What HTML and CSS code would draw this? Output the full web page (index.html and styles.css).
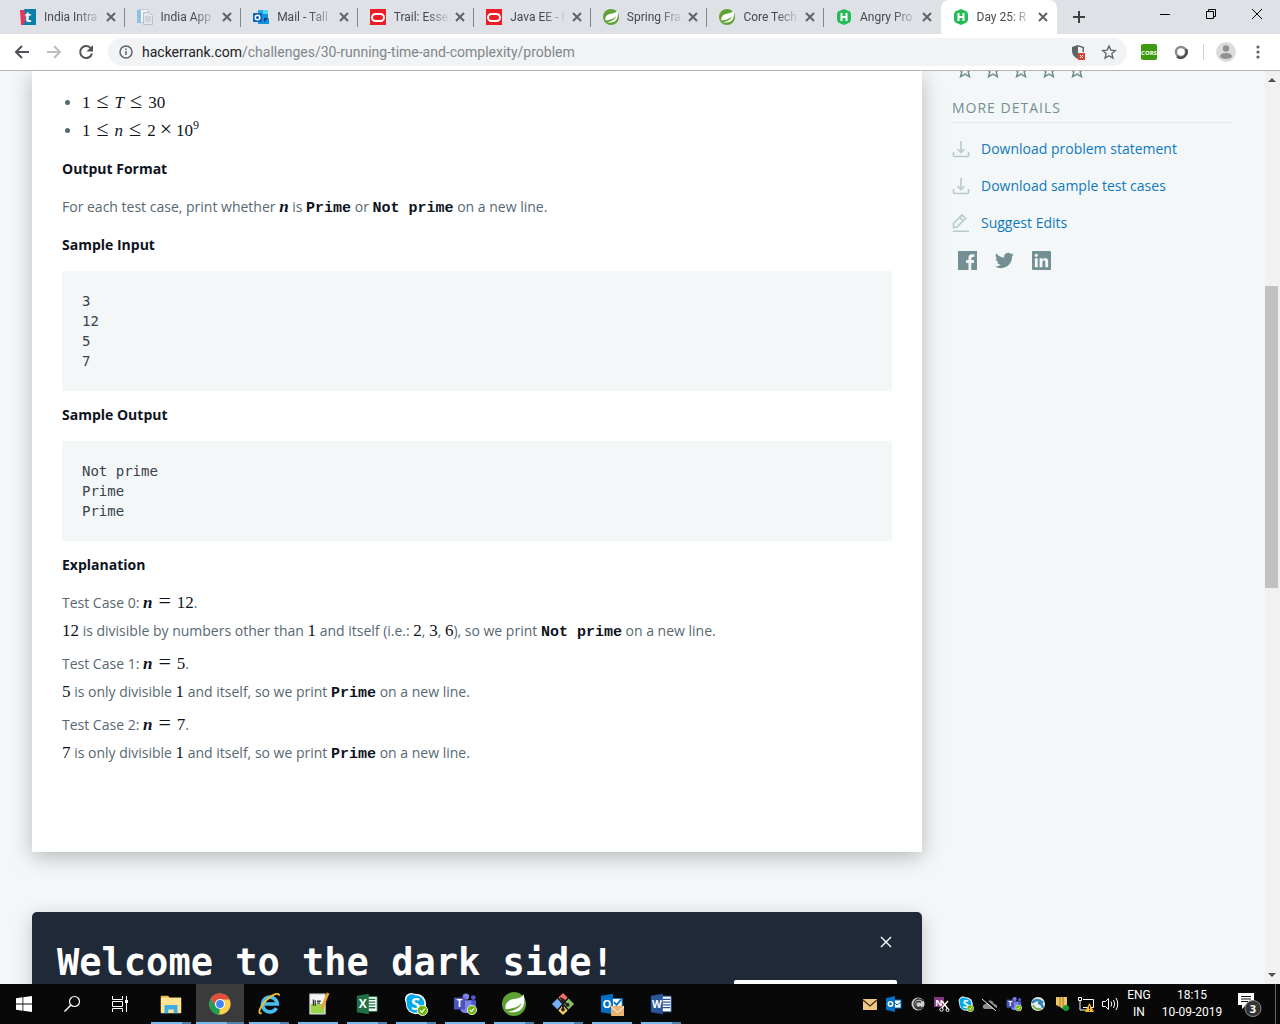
FILE: index.html
```html
<!DOCTYPE html>
<html lang="en">
<head>
<meta charset="utf-8">
<title>Day 25: Running Time and Complexity | HackerRank</title>
<link rel="stylesheet" href="styles.css">
</head>
<body>
<svg class="defs" aria-hidden="true">
  <defs>
    <symbol id="x" viewBox="0 0 16 16"><path d="M4 4l8 8M12 4l-8 8" fill="none" stroke="currentColor" stroke-width="2"/></symbol>
    <symbol id="oracle" viewBox="0 0 16 16"><path fill="#ee1c25" d="M0 0h16v16H0z"/><rect x="2" y="5" width="12" height="7" rx="3.500" fill="none" stroke="#fff" stroke-width="2"/></symbol>
    <symbol id="leaf" viewBox="0 0 16 16"><circle cx="8" cy="8" r="8" fill="#5fa134"/><path fill="#fff" d="M14.500 1.500c1 5 .2 9.200-3 11-2.500 1.400-5.500 1-8 .8 4.500-.8 8.500-2.500 9.700-6-2.500 3-6.700 3.800-10.700 4.200C1.500 7.500 4.500 5.200 8 4.700c2.600-.4 5-.8 6.500-3.200z"/></symbol>
    <symbol id="hacker" viewBox="0 0 16 16"><path fill="#27bb57" d="M8 0l6 2.500L15 5v6l-1.200 2.500L8 16l-5.800-2.500L1 11V5l1-2.500z"/><path d="M5.500 4v8M10.500 4v8M5.500 8h5" stroke="#fff" stroke-width="2"/></symbol>
    <symbol id="outlook" viewBox="0 0 16 16"><path fill="#1490df" d="M5 1h10v8l1 1v5H5z"/><path fill="#50d9ff" d="M10 1h5v4h-5z"/><path fill="#28a8ea" d="M5 1h5v4H5z"/><path fill="#123b6d" d="M11 9l4 0-4 4z"/><rect y="4" width="9" height="9" rx="1" fill="#0a64bd"/><circle cx="4.500" cy="8.500" r="2.300" fill="none" stroke="#fff" stroke-width="1.500"/></symbol>
    <symbol id="download" viewBox="0 0 18 18"><path d="M1.500 12v3.500q0 1 1 1h13q1 0 1-1V12M9 1v11M5.500 9L9 12.500 12.500 9" fill="none" stroke="#b7c9cc" stroke-width="1.600"/></symbol>
    <symbol id="star" viewBox="0 0 24 24"><path d="M12 3l2.700 6.200 6.800.6-5.200 4.500 1.600 6.700-5.900-3.500L6.100 21l1.600-6.700-5.200-4.500 6.800-.6z" fill="none" stroke="currentColor" stroke-width="2"/></symbol>
    <symbol id="ok" viewBox="0 0 12 12"><circle cx="6" cy="6" r="5.500" fill="#6bb700" stroke="#fff"/><path d="M3.500 6l2 2 3-4" fill="none" stroke="#fff" stroke-width="1.400"/></symbol>
    <symbol id="teams" viewBox="0 0 26 26"><circle cx="14" cy="5" r="3.500" fill="#7b83eb"/><circle cx="22" cy="6" r="2.600" fill="#5059c9"/><path fill="#5059c9" d="M18 9h7v7q0 4-5 4z"/><path fill="#7b83eb" d="M9 9h11v9q0 5-6 5t-6-5z"/><path fill="#4b53bc" d="M1 6h12v13H1z"/><text x="7" y="16.500" text-anchor="middle" class="glyph g11">T</text><use href="#ok" x="15" y="14" width="11" height="11"/></symbol>
    <symbol id="skype" viewBox="0 0 26 26"><circle cx="8" cy="8" r="7" fill="#fff"/><circle cx="18" cy="18" r="6" fill="#fff"/><circle cx="13" cy="13" r="11" fill="#fff"/><circle cx="8.500" cy="8.500" r="6" fill="#00a9ec"/><circle cx="12.500" cy="13" r="9.500" fill="#00a9ec"/><text x="12.500" y="19" text-anchor="middle" class="glyph g18">S</text><use href="#ok" x="14" y="14" width="12" height="12"/></symbol>
  </defs>
</svg>

<header class="browser">
  <div class="tabstrip">
    <nav class="tabs" aria-label="Open tabs">
      <div class="tab"><svg class="fav" viewBox="0 0 16 16"><path fill="#e8355a" d="M0 1h8v15H1z"/><path fill="#067fab" d="M4 0h12v16H3q5-6 1-16z"/><text x="8" y="13" text-anchor="middle" class="glyph g15">t</text></svg><span class="title">India Intra</span><button class="close" aria-label="Close tab"><svg><use href="#x"/></svg></button></div>
      <div class="tab"><svg class="fav" viewBox="0 0 16 16"><path d="M2 .5h9v13H2z" fill="#eef5fb" stroke="#b9cfe0"/><path fill="#8fbfe3" d="M0 1h4v13H0z"/><path fill="#e3e6ea" stroke="#b9bfc6" d="M6.500 3.500h6l3 3v9h-9z"/><path stroke="#b9bfc6" d="M8 8h6M8 10h6M8 12h6"/></svg><span class="title">India App</span><button class="close" aria-label="Close tab"><svg><use href="#x"/></svg></button></div>
      <div class="tab"><svg class="fav"><use href="#outlook"/></svg><span class="title">Mail - Tall</span><button class="close" aria-label="Close tab"><svg><use href="#x"/></svg></button></div>
      <div class="tab"><svg class="fav"><use href="#oracle"/></svg><span class="title">Trail: Esse</span><button class="close" aria-label="Close tab"><svg><use href="#x"/></svg></button></div>
      <div class="tab"><svg class="fav"><use href="#oracle"/></svg><span class="title">Java EE - I</span><button class="close" aria-label="Close tab"><svg><use href="#x"/></svg></button></div>
      <div class="tab"><svg class="fav"><use href="#leaf"/></svg><span class="title">Spring Fra</span><button class="close" aria-label="Close tab"><svg><use href="#x"/></svg></button></div>
      <div class="tab"><svg class="fav"><use href="#leaf"/></svg><span class="title">Core Tech</span><button class="close" aria-label="Close tab"><svg><use href="#x"/></svg></button></div>
      <div class="tab last"><svg class="fav"><use href="#hacker"/></svg><span class="title">Angry Pro</span><button class="close" aria-label="Close tab"><svg><use href="#x"/></svg></button></div>
      <div class="tab active"><svg class="fav"><use href="#hacker"/></svg><span class="title">Day 25: R</span><button class="close" aria-label="Close tab"><svg><use href="#x"/></svg></button></div>
    </nav>
    <button class="newtab" aria-label="New tab"><svg viewBox="0 0 16 16"><path d="M8 2v12M2 8h12" stroke="#3c4043" stroke-width="2"/></svg></button>
    <div class="winctl">
      <button aria-label="Minimize"><svg viewBox="0 0 12 12"><path d="M1 6.500h10" stroke="#000"/></svg></button>
      <button aria-label="Restore"><svg viewBox="0 0 12 12"><path d="M1.500 3.500h7v7h-7zM3.500 3.500v-2h7v7h-2" fill="none" stroke="#000"/></svg></button>
      <button aria-label="Close"><svg viewBox="0 0 12 12"><path d="M1 1l10 10M11 1L1 11" stroke="#000"/></svg></button>
    </div>
  </div>
  <div class="toolbar">
    <button class="nav" aria-label="Back"><svg viewBox="0 0 16 16"><path d="M15 8H2M8 2L2 8l6 6" fill="none" stroke="#505357" stroke-width="2"/></svg></button>
    <button class="nav" aria-label="Forward"><svg viewBox="0 0 16 16"><path d="M1 8h13M8 2l6 6-6 6" fill="none" stroke="#bcbec1" stroke-width="2"/></svg></button>
    <button class="nav" aria-label="Reload"><svg viewBox="0 0 16 16"><path d="M13 4.500A6 6 0 1 0 14 9.500" fill="none" stroke="#505357" stroke-width="2"/><path fill="#505357" d="M15 1v6.500H8.500z"/></svg></button>
    <div class="omnibox">
      <svg class="info" viewBox="0 0 16 16"><circle cx="8" cy="8" r="6" fill="none" stroke="#5f6368" stroke-width="1.500"/><path d="M8 7v4M8 4.500v1.500" stroke="#5f6368" stroke-width="1.500"/></svg>
      <label for="url">hackerrank.com</label><input id="url" type="text" value="/challenges/30-running-time-and-complexity/problem">
      <svg class="ic16" viewBox="0 0 16 16"><path fill="#5f6368" d="M8 1l6 2v5h-6v7C4 13 2 10.500 2 7V3z"/><path fill="#f1f3f4" d="M8 2.500l4.500 1.500V8H8z"/><path fill="#db4437" d="M8 9h7v7H8z"/><path d="M10 11l3 3M13 11l-3 3" stroke="#fff"/></svg>
      <button class="bookmark" aria-label="Bookmark this page"><svg class="ic16"><use href="#star"/></svg></button>
    </div>
    <div class="extensions">
      <svg class="ic16" viewBox="0 0 16 16"><rect width="16" height="16" rx="2" fill="#3f9a10"/><text x="8" y="11" text-anchor="middle" class="glyph g6">CORS</text></svg>
      <svg class="ic16" viewBox="0 0 16 16"><circle cx="8" cy="8" r="5" fill="#fff" stroke="#8b8d8f" stroke-width="2.500"/><path d="M4 12.500A6 6 0 0 0 13 5" fill="none" stroke="#4d4f51" stroke-width="2.500"/></svg>
      <span class="vline"></span>
      <svg class="avatar" viewBox="0 0 20 20"><circle cx="10" cy="10" r="10" fill="#dcdcdd"/><circle cx="10" cy="6.500" r="3.200" fill="#8e9093"/><path fill="#8e9093" d="M4 15q0-4 6-4t6 4q-2.500 2-6 2t-6-2z"/></svg>
      <svg class="ic16" viewBox="0 0 16 16"><g fill="#5f6368"><circle cx="8" cy="3" r="1.600"/><circle cx="8" cy="8" r="1.600"/><circle cx="8" cy="13" r="1.600"/></g></svg>
    </div>
  </div>
</header>

<div class="viewport">
  <div class="page">
    <main>
      <article class="card">
        <ul>
          <li><span class="math">1<span class="op">≤</span><i>T</i><span class="op">≤</span>30</span></li>
          <li><span class="math">1<span class="op">≤</span><i>n</i><span class="op">≤</span>2<span class="op bin">×</span>10<sup>9</sup></span></li>
        </ul>
        <h2>Output Format</h2>
        <p>For each test case, print whether <b class="math"><i>n</i></b> is <code>Prime</code> or <code>Not prime</code> on a new line.</p>
        <h2>Sample Input</h2>
        <pre>3
12
5
7</pre>
        <h2>Sample Output</h2>
        <pre>Not prime
Prime
Prime</pre>
        <h2>Explanation</h2>
        <p class="case">Test Case 0: <span class="math"><b><i>n</i></b><span class="op">=</span>12</span>.<br>
        <span class="math">12</span> is divisible by numbers other than <span class="math">1</span> and itself (i.e.: <span class="math">2</span>, <span class="math">3</span>, <span class="math">6</span>), so we print <code>Not prime</code> on a new line.</p>
        <p class="case">Test Case 1: <span class="math"><b><i>n</i></b><span class="op">=</span>5</span>.<br>
        <span class="math">5</span> is only divisible <span class="math">1</span> and itself, so we print <code>Prime</code> on a new line.</p>
        <p class="case">Test Case 2: <span class="math"><b><i>n</i></b><span class="op">=</span>7</span>.<br>
        <span class="math">7</span> is only divisible <span class="math">1</span> and itself, so we print <code>Prime</code> on a new line.</p>
      </article>
      <section class="banner">
        <div class="banner-head">
          <h1>Welcome to the dark side!</h1>
          <button class="dismiss" aria-label="Dismiss"><svg viewBox="0 0 12 12"><path d="M1 1l10 10M11 1L1 11" stroke="#fff" stroke-width="1.400"/></svg></button>
        </div>
        <button class="cta" aria-label="Try it"></button>
      </section>
    </main>
    <aside>
      <div class="stars">
        <svg><use href="#star"/></svg><svg><use href="#star"/></svg><svg><use href="#star"/></svg><svg><use href="#star"/></svg><svg><use href="#star"/></svg>
      </div>
      <h3>MORE DETAILS</h3>
      <ul class="links">
        <li><svg><use href="#download"/></svg><a href="#">Download problem statement</a></li>
        <li><svg><use href="#download"/></svg><a href="#">Download sample test cases</a></li>
        <li><svg viewBox="0 0 18 18"><path d="M1 17.200h16M1.500 13.500v-4L10 1l3.500 3.500L5 13zM8 3.500L11 7" fill="none" stroke="#b7c9cc" stroke-width="1.600"/></svg><a href="#">Suggest Edits</a></li>
      </ul>
      <div class="social">
        <a href="#" aria-label="Facebook"><svg viewBox="0 0 20 20"><path fill="#738f93" d="M0 0h20v20h-6v-7.500h2.800V9.600H14V8q0-1.600 1.500-1.600h1.700V3.500H14.500Q11 3.500 11 7.200v2.400H8.500v2.900H11V20H0z"/></svg></a>
        <a href="#" aria-label="Twitter"><svg viewBox="0 0 24 24"><path fill="#738f93" d="M23.900 4.600a10 10 0 0 1-2.800.8 4.900 4.900 0 0 0 2.100-2.700c-1 .6-2 1-3.100 1.200a4.900 4.900 0 0 0-8.400 4.500C7.700 8.200 4.100 6.300 1.700 3.200a4.900 4.900 0 0 0 1.500 6.500 4.900 4.900 0 0 1-2.200-.6 4.900 4.900 0 0 0 3.900 4.900 5 5 0 0 1-2.200.1 4.900 4.900 0 0 0 4.600 3.400A9.900 9.900 0 0 1 0 19.500a14 14 0 0 0 7.500 2.200c9.100 0 14-7.500 14-14v-.6a10 10 0 0 0 2.400-2.500z"/></svg></a>
        <a href="#" aria-label="LinkedIn"><svg viewBox="0 0 20 20"><rect width="20" height="20" rx="1" fill="#738f93"/><path fill="#f3f7f7" d="M3 7.500h3V17H3zM8 7.500h2.800V9q1-1.700 3-1.700 3.200 0 3.200 4V17h-3v-5q0-2.200-1.500-2.200T11 12v5H8z"/><circle cx="4.500" cy="4.500" r="1.700" fill="#f3f7f7"/></svg></a>
      </div>
    </aside>
  </div>
  <div class="scrollbar" aria-hidden="true">
    <svg viewBox="0 0 15 17"><path fill="#505050" d="M3 11h8L7 7z"/></svg>
    <div class="track"><div class="thumb"></div></div>
    <svg viewBox="0 0 15 17"><path fill="#505050" d="M3 6h8l-4 4z"/></svg>
  </div>
</div>

<footer class="taskbar">
  <button aria-label="Start"><svg class="ic16" viewBox="0 0 16 16"><path fill="#fff" d="M0 2.300l6.500-1v6.300H0zM7.300 1.200L16 0v7.600H7.300zM0 8.400h6.500v6.300L0 13.800zM7.300 8.400H16V16l-8.700-1.200z"/></svg></button>
  <button aria-label="Search"><svg class="ic16" viewBox="0 0 16 16"><circle cx="10.500" cy="5.500" r="5" fill="none" stroke="#fff" stroke-width="1.200"/><path d="M7 9l-6.500 6.500" stroke="#fff" stroke-width="1.400"/></svg></button>
  <button aria-label="Task view"><svg class="ic16" viewBox="0 0 16 16"><path d="M.5 0v3.500h10V0M.5 16v-3.500h10V16M.5 5.500h10v5H.500zM14.500 0v16" fill="none" stroke="#fff"/><path fill="#fff" d="M13 4h3v3h-3z"/></svg></button>
  <div class="apps">
    <button class="app multi" aria-label="File Explorer"><svg viewBox="0 0 26 26"><path fill="#f0b94a" d="M2 4h8l2 3h12v15H2z"/><path fill="#ffe494" d="M2 6h22v17H2z"/><path fill="#3daee4" d="M6 14h14v9h-4v-4h-6v4H6z"/></svg></button>
    <button class="app multi current" aria-label="Chrome"><svg viewBox="0 0 26 26"><circle cx="13" cy="13" r="11.500" fill="#fdcf4c"/><path fill="#e24b3d" d="M3 7.200A11.500 11.500 0 0 1 23.200 8H13L8.500 15.500z"/><path fill="#1f9e5b" d="M3 7.200l5.600 8.300L13 18l-1 6.500A11.500 11.500 0 0 1 3 7.200z"/><circle cx="13" cy="13" r="5.500" fill="#fff"/><circle cx="13" cy="13" r="4.200" fill="#4486f4"/></svg></button>
    <button class="app multi" aria-label="Internet Explorer"><svg viewBox="0 0 26 26"><path d="M21 17.500A8 8 0 1 1 22 13H8" fill="none" stroke="#48bdf0" stroke-width="4"/><path d="M5 23C0 24 3 16 10 9S24 0 24 4" fill="none" stroke="#f2c12e" stroke-width="2"/></svg></button>
    <button class="app" aria-label="Notepad++"><svg viewBox="0 0 26 26"><path fill="#f4f4f4" stroke="#aaa" d="M4 2h17v22H4z"/><path fill="#9bd54a" d="M5 13h15v10H5z"/><path d="M8 8v7M10 9v6M12 10h4M12 12h3" stroke="#333" stroke-width="1.400"/><path d="M24 1l-7 17" stroke="#eaa52d" stroke-width="3"/></svg></button>
    <button class="app multi" aria-label="Excel"><svg viewBox="0 0 26 26"><path fill="#fff" stroke="#217346" d="M13 5h11v16H13z"/><path d="M15 8h7M15 11h7M15 14h7M15 17h7" stroke="#217346" stroke-width="1.500"/><path fill="#1f7145" d="M2 4l13-2v22L2 22z"/><text x="8.500" y="17.500" text-anchor="middle" class="glyph g13">X</text></svg></button>
    <button class="app multi" aria-label="Skype"><svg><use href="#skype"/></svg></button>
    <button class="app" aria-label="Teams"><svg><use href="#teams"/></svg></button>
    <button class="app multi" aria-label="Spring Tools"><svg><use href="#leaf"/></svg></button>
    <button class="app multi" aria-label="Git"><svg viewBox="0 0 26 26"><path fill="#ef6e6b" d="M13 1l5 5-5 6-5-6z"/><path fill="#75aef5" d="M7 7l5 6-5 6-6-6z"/><path fill="#85c16a" d="M19 7l6 6-6 6-5-6z"/><path fill="#f8d360" d="M13 14l5 6-5 5-5-5z"/><path d="M10 6l3 3v11M13 10l5 4" fill="none" stroke="#241f20" stroke-width="2"/><g fill="#241f20"><circle cx="13" cy="9" r="2"/><circle cx="18" cy="14" r="2"/><circle cx="13" cy="19" r="2"/></g></svg></button>
    <button class="app" aria-label="Outlook"><svg viewBox="0 0 26 26"><path fill="#fff" stroke="#0072c6" d="M13 7h11v10H13z"/><path d="M15 11l3 3 5-6" fill="none" stroke="#0072c6" stroke-width="2"/><path fill="#0072c6" d="M1 4l13-2v22L1 22z"/><text x="7.500" y="17" text-anchor="middle" class="glyph g12">O</text><path fill="#e9b571" d="M12 15h14v11H12z"/><path d="M12 16l7 6 7-6" fill="none" stroke="#fff"/></svg></button>
    <button class="app multi" aria-label="Word"><svg viewBox="0 0 26 26"><path fill="#fff" stroke="#2a5699" d="M13 4.500h11v17H13z"/><path d="M15 8h8M15 11h8M15 14h8M15 17h8" stroke="#2a5699" stroke-width="1.300"/><path fill="#2a5699" d="M2 4l13-2v22L2 22z"/><text x="8.500" y="17" text-anchor="middle" class="glyph g11">W</text></svg></button>
  </div>
  <div class="tray">
    <svg viewBox="0 0 16 16"><path fill="#f2c684" d="M1 3h14v11H1z"/><path d="M1 4l7 6 7-6" fill="none" stroke="#3a2a14" stroke-width="1.200"/></svg>
    <svg viewBox="0 0 16 16"><path fill="#fff" stroke="#0072c6" d="M8 4h7v8H8z"/><path d="M9 7l2 2 4-3" stroke="#0072c6" fill="none"/><path fill="#0072c6" d="M0 2l9-2v16l-9-2z"/><circle cx="4.500" cy="8" r="2.200" fill="none" stroke="#fff" stroke-width="1.600"/></svg>
    <svg viewBox="0 0 16 16"><circle cx="8" cy="8" r="6.500" fill="#cfcfcf"/><path d="M13 5a5 5 0 1 0 0 6M11 6.500a3 3 0 1 0 0 4" fill="none" stroke="#333" stroke-width="1.300"/></svg>
    <svg viewBox="0 0 16 16"><path fill="#80397b" d="M0 1h10v10H0z"/><text x="5" y="9.500" text-anchor="middle" class="glyph g9">N</text><path d="M8 5l6 8M14 5l-6 7" stroke="#fff" stroke-width="1.300"/><circle cx="7.500" cy="13.500" r="1.700" fill="none" stroke="#fff"/><circle cx="13.500" cy="14" r="1.500" fill="none" stroke="#fff"/></svg>
    <svg><use href="#skype"/></svg>
    <svg viewBox="0 0 16 16"><path fill="#8d8f91" d="M3 13q-3-.5-2-3.500 1-2 3-1.500 1-4 4.500-3.500 3 .5 3.200 3.500 3.500 0 3.500 3 0 2-2 2z"/><path d="M1 2l14 12" stroke="#000" stroke-width="2"/><path d="M0 3l14 12" stroke="#eee"/></svg>
    <svg><use href="#teams"/></svg>
    <svg viewBox="0 0 16 16"><circle cx="8" cy="8" r="7" fill="#e8eeee"/><path d="M2 7q5-6 11 0M8 7q4 0 5 5" fill="none" stroke="#2e85b8" stroke-width="2.500"/><path d="M3 9q2 5 8 4" fill="none" stroke="#72b043" stroke-width="2"/></svg>
    <svg viewBox="0 0 16 16"><path fill="#efc566" d="M2 1h4v10l-4-2zM6 1h3v12l-3-2zM9 1h4v13l-4-2z"/><path d="M6 1v10M9 1v11" stroke="#9d7624"/><circle cx="12" cy="12" r="3" fill="#12a233"/></svg>
    <svg viewBox="0 0 16 16"><path d="M5 3.500h10.500v8H5M.5 1.500h3v3h-3zM2 5v9h6" fill="none" stroke="#fff"/><path fill="#f9bd27" d="M11.500 7l4.500 9H7z"/><path d="M11.500 10v3M11.500 14v1" stroke="#000"/></svg>
    <svg viewBox="0 0 16 16"><path d="M.5 5.500h3l3-3v11l-3-3h-3zM9 5.500q1.500 2.500 0 5M11.500 4q2.500 4 0 8M14 2q3.500 6 0 12" fill="none" stroke="#fff"/></svg>
  </div>
  <div class="clock lang"><span>ENG</span><span>IN</span></div>
  <div class="clock time"><span>18:15</span><span>10-09-2019</span></div>
  <button class="notify" aria-label="Notifications"><svg viewBox="0 0 26 26"><path fill="#fff" d="M1 2h16v12H9l-4 4v-4H1z"/><path d="M4 5.500h10M4 8h10M4 10.500h7" stroke="#111"/><circle cx="16" cy="17.500" r="8" fill="#333" stroke="#8a8a8a"/><text x="16" y="21.500" text-anchor="middle" class="glyph g11">3</text></svg></button>
</footer>
</body>
</html>
```

FILE: styles.css
```css
* { box-sizing: border-box; }

body {
  margin: 0;
  height: 100vh;
  display: flex;
  flex-direction: column;
  overflow: hidden;
  background: #f3f7f7;
  font-family: "Open Sans", "Noto Sans", sans-serif;
  font-size: 14px;
}

svg { display: block; flex: none; overflow: visible; }
button { border: 0; padding: 0; background: none; color: inherit; font: inherit; }
.defs { position: absolute; width: 0; height: 0; }
.ic16 { width: 16px; height: 16px; }

/* lettering inside small logos */
.glyph { fill: #fff; font-family: "Open Sans", sans-serif; font-weight: 700; }
.g6 { font-size: 6px; }
.g9 { font-size: 9px; }
.g11 { font-size: 11px; }
.g12 { font-size: 12px; }
.g13 { font-size: 13px; }
.g15 { font-size: 15px; }
.g18 { font-size: 18px; }

/* browser chrome */
.browser { flex: none; background: #fff; border-bottom: 1px solid #b6b4b6; }
.tabstrip { display: flex; height: 34px; padding-left: 8px; background: #dee1e6; }
.tabs { display: flex; flex: 1; min-width: 0; }
.tab {
  flex: 1 1 0;
  min-width: 0;
  display: flex;
  align-items: center;
  padding: 0 6px 0 12px;
  background: linear-gradient(#80868b, #80868b) right 8px / 1px 19px no-repeat;
}
.tab.last { background: none; }
.tab.active { background: #fff; border-radius: 8px 8px 0 0; }
.fav { width: 16px; height: 16px; margin-right: 8px; }
.title {
  flex: 1;
  min-width: 0;
  white-space: nowrap;
  font-family: Roboto, "Open Sans", sans-serif;
  font-size: 12px;
  color: #45494d;
  -webkit-mask-image: linear-gradient(90deg, #000 60%, rgba(0, 0, 0, 0.1));
  mask-image: linear-gradient(90deg, #000 60%, rgba(0, 0, 0, 0.1));
}
.close { margin-left: 4px; color: #5f6368; }
.close svg { width: 16px; height: 16px; }
.newtab { flex: none; width: 44px; display: grid; place-items: center; }
.newtab svg { width: 16px; height: 16px; }
.winctl { flex: none; display: flex; width: 179px; padding-left: 41px; padding-bottom: 6px; }
.winctl button { flex: 1; display: grid; place-items: center; }
.winctl svg { width: 12px; height: 12px; }

.toolbar { display: flex; align-items: center; height: 36px; padding-left: 6px; }
.nav { width: 32px; display: grid; place-items: center; }
.nav svg { width: 16px; height: 16px; }
.omnibox {
  flex: 1;
  min-width: 0;
  display: flex;
  align-items: center;
  height: 28px;
  margin-left: 6px;
  padding: 0 10px;
  border-radius: 14px;
  background: #f1f3f4;
  font-family: Roboto, "Open Sans", sans-serif;
}
.info { width: 16px; height: 16px; margin-right: 8px; }
.omnibox label { color: #202124; }
.omnibox input {
  flex: 1;
  min-width: 0;
  border: 0;
  padding: 0;
  background: none;
  font: inherit;
  color: #80868b;
}
.bookmark { margin-left: 15px; color: #5f6368; }
.extensions { display: flex; align-items: center; gap: 16px; padding: 0 14px; }
.vline { width: 1px; height: 16px; margin-left: -2px; background: #cfd1d3; }
.avatar { width: 20px; height: 20px; margin: 0 6px 0 -4px; }
.extensions .ic16:last-child { margin-left: -8px; }

/* page */
.viewport { flex: 1; min-height: 0; display: flex; }
.page {
  flex: 1;
  min-width: 0;
  display: flex;
  gap: 30px;
  padding: 0 33px 0 32px;
  overflow: hidden;
}
main { flex: 1; min-width: 0; }
.card {
  padding: 18px 30px 85px;
  background: #fff;
  box-shadow: 0 5px 20px rgba(0, 0, 0, 0.25);
  color: #576871;
  line-height: 28px;
}
.card ul { margin: 0; padding-left: 20px; }
.card h2 { margin: 10px 0; font-size: 14px; font-weight: 700; line-height: 28px; color: #0e141e; }
.card p { margin: 0; }
.card .case + .case { margin-top: 5px; }
.card pre {
  margin: 12px 0 0;
  padding: 20px;
  background: #f3f7f7;
  color: #39424e;
  font-family: "DejaVu Sans Mono", monospace;
  font-size: 14px;
  line-height: 20px;
}
.math { font-family: "Liberation Serif", serif; font-size: 17px; line-height: 20px; color: #0e141e; }
.math sup { font-size: 12px; line-height: 0; }
.op { margin: 0 6px; font-size: 22px; line-height: 0; }
.bin { margin: 0 4px; }
.card code { font-family: "Liberation Mono", monospace; font-size: 15px; font-weight: 700; line-height: 20px; color: #0e141e; }

.banner {
  margin-top: 60px;
  padding: 24px 25px;
  border-radius: 5px;
  background: #202937;
  box-shadow: 0 5px 20px rgba(0, 0, 0, 0.2);
  color: #fff;
}
.banner-head { display: flex; justify-content: space-between; align-items: flex-start; }
.banner h1 {
  margin: 0;
  padding-top: 10px;
  font-family: "DejaVu Sans Mono", monospace;
  font-size: 37px;
  font-weight: 700;
  line-height: 34px;
  white-space: nowrap;
}
.dismiss { padding: 0 5px; }
.dismiss svg { width: 12px; height: 12px; }
.cta { display: block; width: 163px; height: 44px; margin-left: auto; border-radius: 2px; background: #fff; }

aside { flex: none; width: 280px; }
.stars {
  display: flex;
  align-items: flex-end;
  gap: 10px;
  height: 8px;
  padding-left: 4px;
  overflow: hidden;
  color: #738f93;
}
.stars svg { width: 18px; height: 18px; }
aside h3 {
  margin: 18px 0 14px;
  padding-bottom: 3px;
  border-bottom: 1px solid #e1ecec;
  font-size: 14px;
  font-weight: 400;
  line-height: 22px;
  letter-spacing: 1px;
  color: #738f93;
}
.links { display: grid; gap: 13px; margin: 0; padding: 0; list-style: none; }
.links li { display: flex; align-items: center; gap: 11px; line-height: 24px; }
.links svg { width: 18px; height: 18px; }
.links a { color: #1079bf; text-decoration: none; }
.social { display: flex; gap: 18px; padding: 16px 6px; }
.social svg { width: 19px; height: 19px; }

.scrollbar { flex: none; width: 15px; display: flex; flex-direction: column; background: #f1f1f1; }
.scrollbar svg { width: 15px; height: 17px; }
.track { flex: 1; padding: 198px 2px 0 0; }
.thumb { height: 302px; background: #c1c1c1; }

/* taskbar */
.taskbar { flex: none; display: flex; align-items: stretch; height: 40px; background: #080808; color: #fff; }
.taskbar button { width: 48px; display: grid; place-items: center; }
.apps { display: flex; gap: 1px; margin-left: 3px; }
.app svg { width: 24px; height: 24px; }
.app { background: linear-gradient(#76b9ed, #76b9ed) bottom / 40px 2px no-repeat; }
.app.multi { background-image: linear-gradient(90deg, #76b9ed 31px, #4f82ac 31px); }
.app.current { background-size: 48px 2px; background-color: #3b3b3b; }
.tray { display: flex; align-items: center; gap: 8px; margin-left: auto; }
.tray svg { width: 16px; height: 16px; }
.clock {
  display: flex;
  flex-direction: column;
  justify-content: center;
  text-align: center;
  font-family: Roboto, "Open Sans", sans-serif;
  font-size: 12px;
  line-height: 17px;
}
.lang { width: 42px; }
.time { width: 64px; }
.taskbar .notify { width: 52px; margin-right: 4px; border-right: 1px solid #666; }
.notify svg { width: 26px; height: 26px; }
```
